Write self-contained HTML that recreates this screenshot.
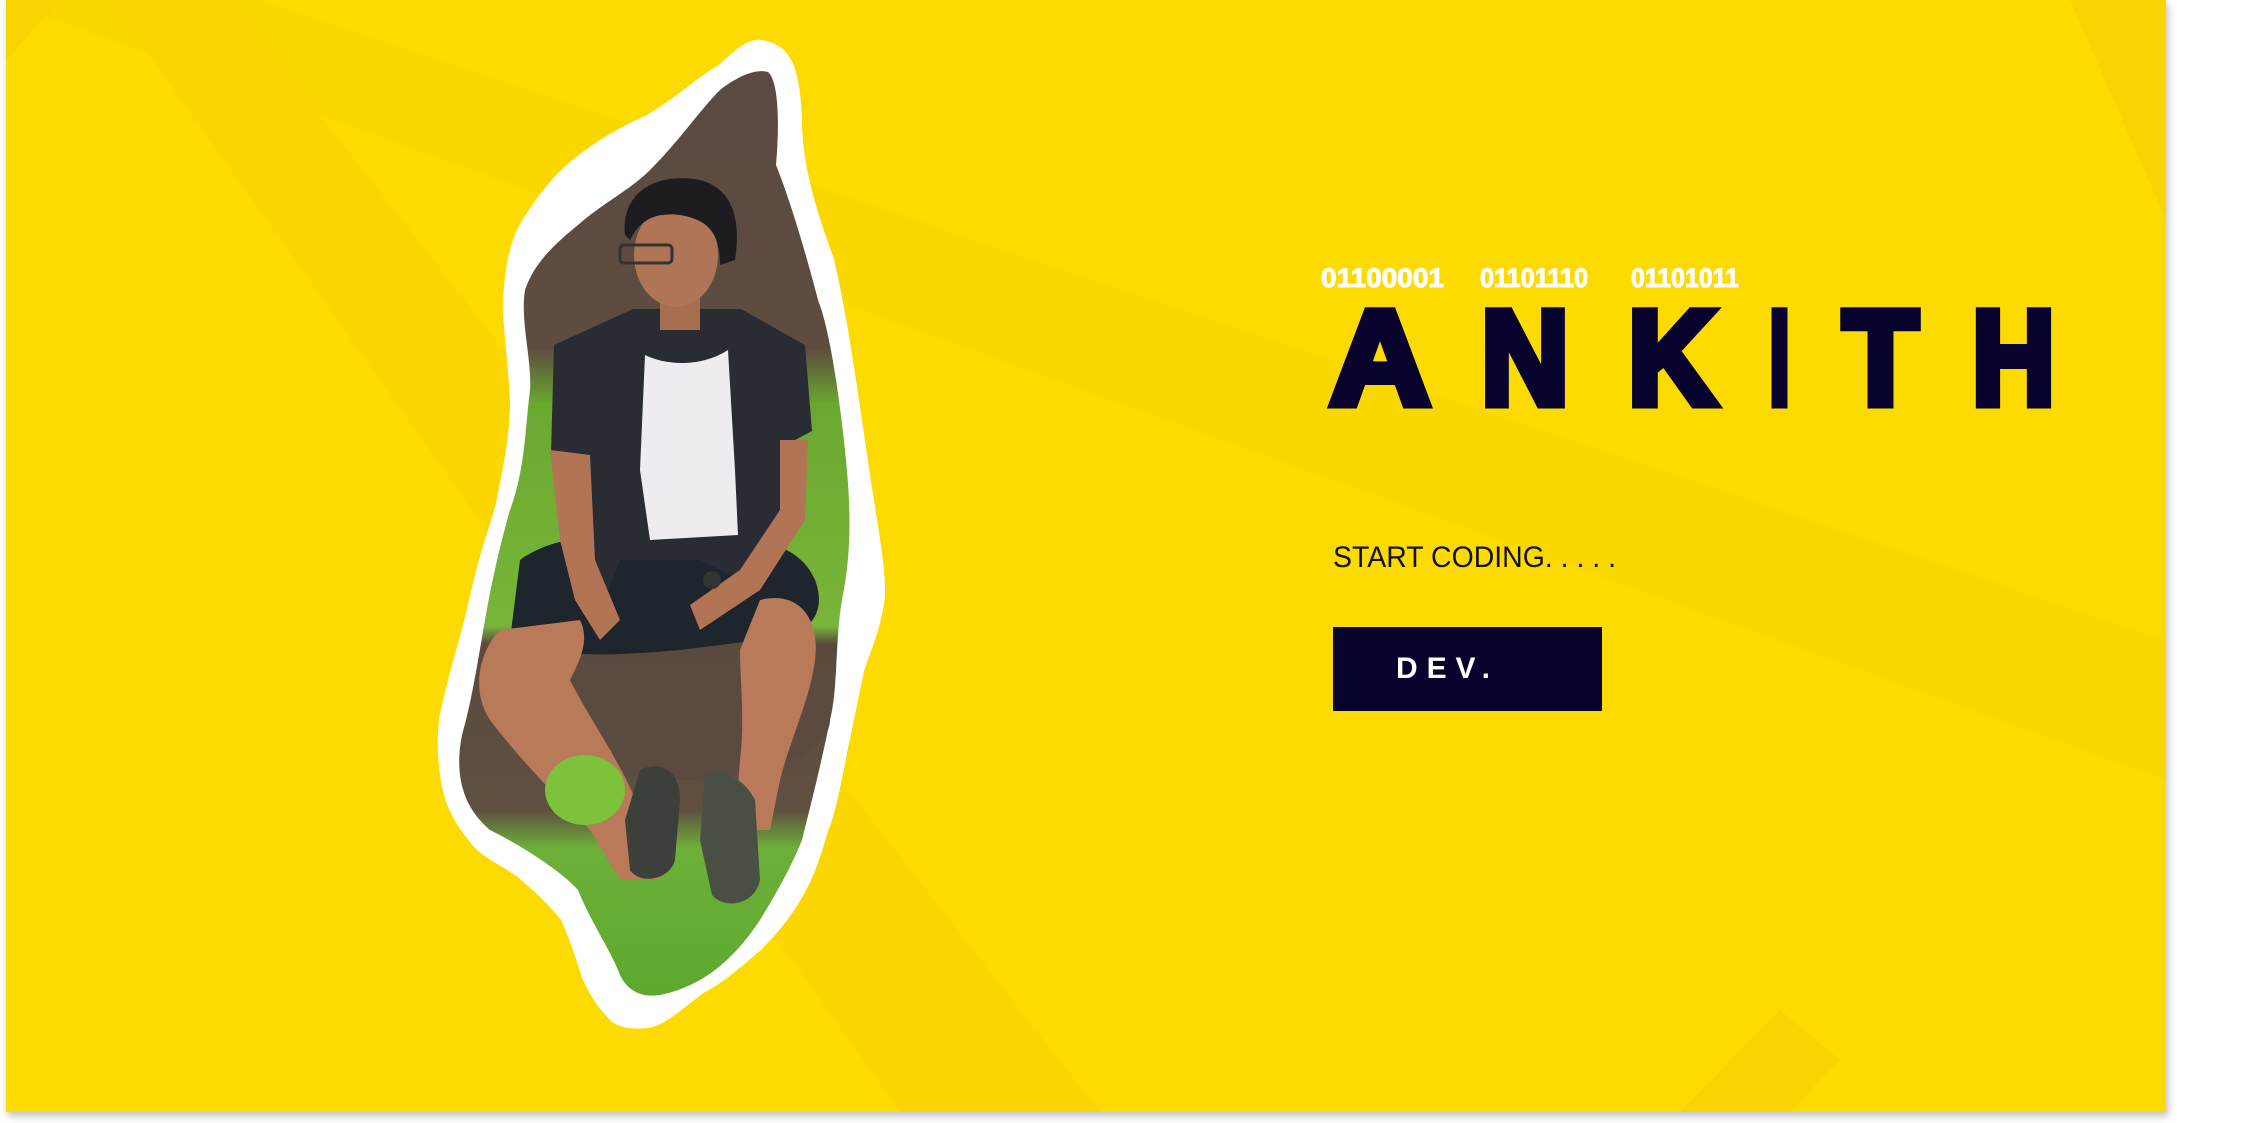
<!DOCTYPE html>
<html><head><meta charset="utf-8"><style>
html,body{margin:0;padding:0;background:#fff;width:2243px;height:1123px;overflow:hidden}
svg{display:block}
</style></head><body>
<svg width="2243" height="1123" viewBox="0 0 2243 1123" xmlns="http://www.w3.org/2000/svg">
<defs>
<filter id="sh" x="-5%" y="-5%" width="110%" height="110%"><feDropShadow dx="2" dy="4" stdDeviation="4" flood-color="#000" flood-opacity="0.25"/></filter>
<clipPath id="panel"><rect x="6" y="0" width="2160" height="1112"/></clipPath>
<linearGradient id="bg" x1="0" y1="0" x2="0" y2="1">
<stop offset="0" stop-color="#5b4a42"/><stop offset="0.3" stop-color="#5e4c40"/><stop offset="0.36" stop-color="#6aa830"/><stop offset="0.6" stop-color="#78b53a"/><stop offset="0.62" stop-color="#5a4a3e"/><stop offset="0.8" stop-color="#5f5040"/><stop offset="0.84" stop-color="#6cb038"/><stop offset="1" stop-color="#5ea82e"/>
</linearGradient>
</defs>
<rect x="6" y="0" width="2160" height="1112" fill="#FDDB00" filter="url(#sh)"/>
<g clip-path="url(#panel)">
<polygon points="110,0 230,0 1100,1112 900,1112" fill="#FAD500" opacity="0.8"/>
<polygon points="260,0 2166,640 2166,780 0,0" fill="#FAD400" opacity="0.5"/>
<polygon points="6,0 60,0 6,60" fill="#FAD400"/>
<polygon points="2070,0 2166,0 2166,220" fill="#FAD400"/>
<polygon points="1780,1010 1840,1060 1790,1112 1680,1112" fill="#FAD400"/>
</g>
<path d="M762,40 C785,45 800,55 802,120 C802,170 820,220 834,259 C848,320 856,380 870,475 C880,540 888,580 884,604 C878,640 866,660 863,676 C856,710 852,730 848,748 C840,790 835,815 827,834 C820,860 812,880 805,892 C790,920 775,935 762,949 C740,968 720,985 705,992 C680,1010 665,1026 647,1028 C630,1030 618,1027 611,1021 C595,1005 588,990 582,978 C575,955 568,935 561,920 C545,900 530,888 518,877 C500,865 485,858 475,848 C455,825 447,808 443,791 C437,765 437,740 439,719 C445,690 452,665 457,647 C465,620 470,595 475,575 C484,540 492,520 496,503 C505,460 510,430 510,403 C508,360 503,330 503,302 C505,260 512,235 525,216 C545,185 560,170 575,158 C600,138 625,125 647,115 C680,95 700,75 719,65 C735,50 748,38 762,40 Z" fill="#fff"/>
<path d="M768,72 C778,80 780,120 776,165 C790,200 805,250 818,300 C830,330 840,400 846,460 C852,520 850,560 842,600 C835,640 838,690 830,720 C822,760 812,800 802,840 C790,870 775,895 760,920 C740,950 710,985 660,995 C640,998 625,990 618,970 C610,950 590,920 578,890 C560,870 520,845 490,830 C460,805 455,770 462,735 C472,700 478,660 485,620 C492,580 500,545 510,510 C525,470 525,430 530,390 C532,360 520,320 525,290 C535,260 560,240 578,225 C600,205 630,190 650,170 C680,140 700,110 720,90 C735,78 755,68 768,72 Z" fill="url(#bg)"/>
<ellipse cx="680" cy="720" rx="150" ry="60" fill="#5a4a40"/>
<path d="M520,560 C560,530 640,530 700,540 C760,535 800,545 815,580 C830,620 800,640 760,640 L680,650 C620,655 560,660 510,640 Z" fill="#1f252c"/>
<path d="M500,630 C480,650 470,690 490,720 C520,760 560,800 590,830 L620,880 L660,880 L640,810 C620,760 590,720 570,680 C580,660 590,640 580,620 Z" fill="#b87a58"/>
<path d="M760,600 C800,590 820,620 815,660 C810,700 790,740 780,780 L770,830 L735,830 L740,760 C745,720 740,680 740,650 Z" fill="#b87a58"/>
<path d="M640,770 C660,760 680,770 680,800 L675,860 C670,880 640,885 630,870 L625,820 Z" fill="#3d403a"/>
<path d="M705,775 C725,768 745,780 755,800 L760,880 C755,905 725,910 712,895 L700,840 Z" fill="#4a4f46"/>
<ellipse cx="585" cy="790" rx="40" ry="35" fill="#7cc23a"/>
<path d="M554,345 L633,309 L741,309 L805,345 L812,431 L784,446 L791,518 L760,590 L700,560 L620,560 L604,600 L575,520 L551,453 Z" fill="#2a2c33"/>
<path d="M645,355 C665,365 700,368 728,350 L735,470 L738,535 L650,540 L640,470 Z" fill="#eeecf0"/>
<path d="M550,450 L590,455 L595,560 L620,620 L600,640 L575,600 L560,540 Z" fill="#b17555"/>
<path d="M780,440 L808,440 L805,520 L760,590 L700,630 L690,605 L740,570 L780,510 Z" fill="#b17555"/>
<circle cx="712" cy="580" r="9" fill="#333"/>
<rect x="660" y="280" width="40" height="50" fill="#a86e50"/>
<ellipse cx="676" cy="255" rx="42" ry="52" fill="#b07456"/>
<path d="M625,235 C620,190 660,172 700,180 C730,188 742,215 735,260 L720,265 C720,235 710,220 680,215 C655,212 640,220 630,240 Z" fill="#1d1c20"/>
<rect x="620" y="245" width="52" height="18" rx="4" fill="none" stroke="#333" stroke-width="3"/>
<g font-family="'Liberation Sans',sans-serif" font-weight="700" fill="#fff" stroke="#fff" stroke-width="1" font-size="27">
<text x="1321" y="287" textLength="123" lengthAdjust="spacingAndGlyphs">01100001</text>
<text x="1480" y="287" textLength="108" lengthAdjust="spacingAndGlyphs">01101110</text>
<text x="1631" y="287" textLength="108" lengthAdjust="spacingAndGlyphs">01101011</text>
</g>
<g font-family="'Liberation Sans',sans-serif" font-weight="700" fill="#07032c" stroke="#07032c" stroke-width="9" stroke-linejoin="miter" font-size="134">
<text x="1330" y="404" textLength="100" lengthAdjust="spacingAndGlyphs">A</text>
<text x="1481" y="404" textLength="88" lengthAdjust="spacingAndGlyphs">N</text>
<text x="1628" y="404" textLength="88" lengthAdjust="spacingAndGlyphs">K</text>
<text x="1769" y="404" textLength="21" lengthAdjust="spacingAndGlyphs">I</text>
<text x="1843" y="404" textLength="75" lengthAdjust="spacingAndGlyphs">T</text>
<text x="1972" y="404" textLength="83" lengthAdjust="spacingAndGlyphs">H</text>
</g>
<text x="1333" y="567" font-family="'Liberation Sans',sans-serif" font-size="30" fill="#111" textLength="283" lengthAdjust="spacingAndGlyphs">START CODING. . . . .</text>
<rect x="1333" y="627" width="269" height="84" fill="#07032c"/>
<text x="1396" y="678" font-family="'Liberation Sans',sans-serif" font-weight="700" font-size="30" fill="#fff" textLength="94" lengthAdjust="spacing">DEV.</text>
</svg>
</body></html>
